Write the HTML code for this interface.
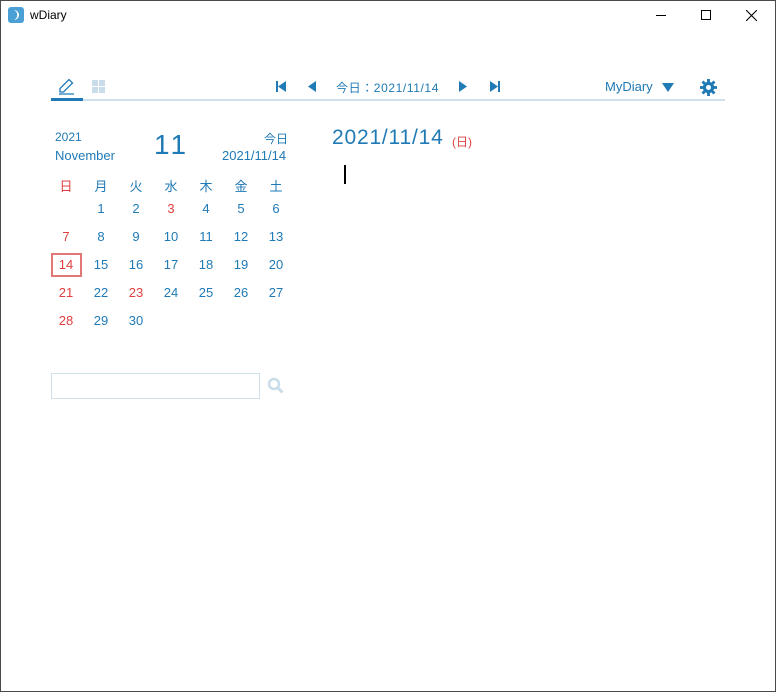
<!DOCTYPE html>
<html><head><meta charset="utf-8"><style>
*{margin:0;padding:0;box-sizing:border-box}
body{width:776px;height:692px;background:#fff;font-family:"Liberation Sans","Noto Sans CJK JP",sans-serif;position:relative;overflow:hidden;color:#1f7ab5}
.frame{position:absolute;left:0;top:0;width:776px;height:692px;border:1px solid #4a4a4a}
.a{position:absolute;white-space:nowrap}
.r{color:#e04040}
.cal span{position:absolute;width:30px;text-align:center;font-size:13px;transform:translateX(-15px)}
</style></head><body>
<div class="frame"></div>
<svg class="a" style="left:8px;top:7px" width="16" height="16"><rect width="16" height="16" rx="3" fill="#4a9fd4"/><path d="M6 3 A5.5 5.5 0 0 1 6 13 A4 4 0 0 0 6 3Z" fill="#fff"/></svg>
<div class="a" style="left:30px;top:8px;font-size:12px;color:#000">wDiary</div>
<div class="a" style="left:656px;top:15px;width:10px;height:1px;background:#000"></div>
<div class="a" style="left:701px;top:10px;width:10px;height:10px;border:1px solid #000"></div>
<svg class="a" style="left:746px;top:10px" width="11" height="11"><path d="M0 0L11 11M11 0L0 11" stroke="#000" stroke-width="1.1"/></svg>
<svg class="a" style="left:57px;top:78px" width="20" height="18"><path d="M3 14 L3 10.5 L12 1.5 L15.5 5 L6.5 14 Z M2 16 H17" fill="none" stroke="#1f7ab5" stroke-width="1.3"/></svg>
<div class="a" style="left:51px;top:98px;width:32px;height:3px;background:#1f7ab5"></div>
<div class="a" style="left:83px;top:99px;width:642px;height:2px;background:#cfe2ec"></div>
<svg class="a" style="left:92px;top:80px" width="14" height="14" fill="#c8dde9"><rect x="0" y="0" width="6" height="6"/><rect x="7" y="0" width="6" height="6"/><rect x="0" y="7" width="6" height="6"/><rect x="7" y="7" width="6" height="6"/></svg>
<svg class="a" style="left:276px;top:81px" width="10" height="11" fill="#1f7ab5"><rect x="0" y="0" width="2" height="11"/><path d="M10 0V11L2 5.5Z"/></svg>
<svg class="a" style="left:308px;top:81px" width="9" height="11" fill="#1f7ab5"><path d="M8 0V11L0 5.5Z"/></svg>
<div class="a" style="left:336px;top:79px;font-size:12px;letter-spacing:0.6px">今日：2021/11/14</div>
<svg class="a" style="left:459px;top:81px" width="9" height="11" fill="#1f7ab5"><path d="M0 0V11L8 5.5Z"/></svg>
<svg class="a" style="left:490px;top:81px" width="10" height="11" fill="#1f7ab5"><path d="M0 0V11L8 5.5Z"/><rect x="8" y="0" width="2" height="11"/></svg>
<div class="a" style="left:605px;top:79px;font-size:13px">MyDiary</div>
<svg class="a" style="left:662px;top:83px" width="12" height="9" fill="#1f7ab5"><path d="M0 0H12L6 9Z"/></svg>
<svg class="a" style="left:700px;top:79px" width="17" height="17" viewBox="0 0 24 24"><g fill="#1f7ab5"><circle cx="12" cy="12" r="8"/><g><rect x="10" y="0" width="4" height="24"/><rect x="10" y="0" width="4" height="24" transform="rotate(45 12 12)"/><rect x="10" y="0" width="4" height="24" transform="rotate(90 12 12)"/><rect x="10" y="0" width="4" height="24" transform="rotate(135 12 12)"/></g></g><circle cx="12" cy="12" r="3.5" fill="#fff"/></svg>
<div class="a" style="left:55px;top:130px;font-size:12px">2021</div>
<div class="a" style="left:55px;top:148px;font-size:13px">November</div>
<div class="a" style="left:154px;top:129px;font-size:28px;letter-spacing:3px">11</div>
<div class="a" style="left:264px;top:130px;font-size:12px">今日</div>
<div class="a" style="left:222px;top:148px;font-size:13px">2021/11/14</div>
<div class="cal">
<span class="r" style="left:66px;top:176px">日</span><span style="left:101px;top:176px">月</span><span style="left:136px;top:176px">火</span><span style="left:171px;top:176px">水</span><span style="left:206px;top:176px">木</span><span style="left:241px;top:176px">金</span><span style="left:276px;top:176px">土</span>
<span style="left:101px;top:201px">1</span><span style="left:136px;top:201px">2</span><span class="r" style="left:171px;top:201px">3</span><span style="left:206px;top:201px">4</span><span style="left:241px;top:201px">5</span><span style="left:276px;top:201px">6</span>
<span class="r" style="left:66px;top:229px">7</span><span style="left:101px;top:229px">8</span><span style="left:136px;top:229px">9</span><span style="left:171px;top:229px">10</span><span style="left:206px;top:229px">11</span><span style="left:241px;top:229px">12</span><span style="left:276px;top:229px">13</span>
<span class="r" style="left:66px;top:257px">14</span><span style="left:101px;top:257px">15</span><span style="left:136px;top:257px">16</span><span style="left:171px;top:257px">17</span><span style="left:206px;top:257px">18</span><span style="left:241px;top:257px">19</span><span style="left:276px;top:257px">20</span>
<span class="r" style="left:66px;top:285px">21</span><span style="left:101px;top:285px">22</span><span class="r" style="left:136px;top:285px">23</span><span style="left:171px;top:285px">24</span><span style="left:206px;top:285px">25</span><span style="left:241px;top:285px">26</span><span style="left:276px;top:285px">27</span>
<span class="r" style="left:66px;top:313px">28</span><span style="left:101px;top:313px">29</span><span style="left:136px;top:313px">30</span>
</div>
<div class="a" style="left:51px;top:253px;width:31px;height:24px;border:2px solid #e07878"></div>
<div class="a" style="left:51px;top:373px;width:209px;height:26px;border:1px solid #cfe0ea"></div>
<svg class="a" style="left:267px;top:377px" width="17" height="17"><circle cx="7" cy="7" r="5" fill="none" stroke="#c8dde9" stroke-width="2.5"/><path d="M10.5 10.5L15.5 15.5" stroke="#c8dde9" stroke-width="3"/></svg>
<div class="a" style="left:332px;top:126px;font-size:21px;letter-spacing:0.8px">2021/11/14</div>
<div class="a r" style="left:452px;top:133px;font-size:12px">(日)</div>
<div class="a" style="left:344px;top:165px;width:2px;height:19px;background:#000"></div>
</body></html>
